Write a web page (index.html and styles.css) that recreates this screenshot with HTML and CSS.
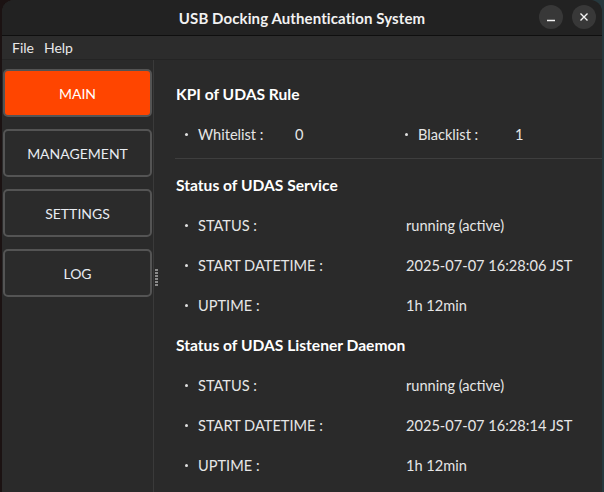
FILE: index.html
```html
<!DOCTYPE html>
<html>
<head>
<meta charset="utf-8">
<link rel="stylesheet" href="styles.css">
</head>
<body>
<div class="desk">
  <div class="window">
    <div class="titlebar">
      <div class="title">USB Docking Authentication System</div>
      <div class="wbtns">
        <span class="wbtn"><svg width="10" height="10" viewBox="0 0 10 10"><path d="M1 8.5h8" stroke="#f2f2f2" stroke-width="1.4"/></svg></span>
        <span class="wbtn"><svg width="10" height="10" viewBox="0 0 10 10"><path d="M1.5 1.5l7 7M8.5 1.5l-7 7" stroke="#f2f2f2" stroke-width="1.4"/></svg></span>
      </div>
    </div>
    <div class="menubar">
      <span class="menu">File</span>
      <span class="menu">Help</span>
    </div>
    <div class="body">
      <nav class="sidebar">
        <button class="navbtn active">MAIN</button>
        <button class="navbtn">MANAGEMENT</button>
        <button class="navbtn">SETTINGS</button>
        <button class="navbtn">LOG</button>
      </nav>
      <div class="splitter"><span class="grip"></span></div>
      <main class="content">
        <h2 class="heading">KPI of UDAS Rule</h2>
        <div class="kpi">
          <div class="kpi-item"><span class="dot"></span><span class="klabel">Whitelist :</span><span class="kval">0</span></div>
          <div class="kpi-item"><span class="dot"></span><span class="klabel">Blacklist :</span><span class="kval">1</span></div>
        </div>
        <hr class="sep">
        <h2 class="heading">Status of UDAS Service</h2>
        <div class="row"><span class="dot"></span><span class="label">STATUS :</span><span class="val">running (active)</span></div>
        <div class="row"><span class="dot"></span><span class="label">START DATETIME :</span><span class="val">2025-07-07 16:28:06 JST</span></div>
        <div class="row"><span class="dot"></span><span class="label">UPTIME :</span><span class="val">1h 12min</span></div>
        <h2 class="heading">Status of UDAS Listener Daemon</h2>
        <div class="row"><span class="dot"></span><span class="label">STATUS :</span><span class="val">running (active)</span></div>
        <div class="row"><span class="dot"></span><span class="label">START DATETIME :</span><span class="val">2025-07-07 16:28:14 JST</span></div>
        <div class="row"><span class="dot"></span><span class="label">UPTIME :</span><span class="val">1h 12min</span></div>
      </main>
    </div>
  </div>
</div>
</body>
</html>
```

FILE: styles.css
```css
* { box-sizing: border-box; }
html, body { margin: 0; padding: 0; }
body {
  width: 604px;
  height: 492px;
  overflow: hidden;
  background: #1b1212;
  font-family: Lato, "Noto Sans", sans-serif;
  color: #e6e6e6;
}
.desk {
  display: flex;
  height: 492px;
  padding-left: 2px;
  padding-right: 2px;
  background: linear-gradient(to right, #1b1212 0, #1b1212 50%, #26383d 50%, #26383d 100%);
}
.window {
  flex: 1;
  display: flex;
  flex-direction: column;
  background: #2a2a2a;
  border-radius: 12px 12px 0 0;
  overflow: hidden;
}
.titlebar {
  height: 36px;
  flex: none;
  background: #222222;
  border-bottom: 1px solid #0f0f0f;
  display: flex;
  align-items: center;
  justify-content: center;
  position: relative;
}
.title {
  font-size: 15px;
  font-weight: 700;
  color: #f2f2f2;
  letter-spacing: 0.1px;
}
.wbtns {
  position: absolute;
  right: 6px;
  top: 5px;
  display: flex;
  gap: 9px;
}
.wbtn {
  width: 24px;
  height: 24px;
  border-radius: 50%;
  background: #383838;
  display: flex;
  align-items: center;
  justify-content: center;
}
.menubar {
  height: 24px;
  flex: none;
  display: flex;
  align-items: center;
  gap: 10px;
  padding-left: 10px;
  background: #2c2c2c;
  border-bottom: 1px solid #242424;
  font-size: 14px;
  color: #e8e8e8;
}
.body {
  flex: 1;
  display: flex;
  min-height: 0;
}
.sidebar {
  width: 151px;
  flex: none;
  display: flex;
  flex-direction: column;
  gap: 12px;
  padding: 9px 0 0 1px;
}
.navbtn {
  height: 48px;
  width: 149px;
  border: 2px solid #545454;
  border-radius: 5px;
  background: #2b2b2b;
  color: #e8ecf2;
  font-family: Lato, "Noto Sans", sans-serif;
  font-size: 14px;
}
.navbtn.active {
  background: #ff4500;
  color: #ffffff;
}
.splitter {
  width: 22px;
  flex: none;
  border-left: 1px solid #3a3a3a;
  display: flex;
  padding-top: 209px;
}
.grip {
  width: 3px;
  height: 17px;
  margin-left: 1px;
  background: repeating-linear-gradient(to bottom, #8a8a8a 0, #8a8a8a 2px, transparent 2px, transparent 3px);
}
.content {
  flex: 1;
  padding-top: 14px;
  min-width: 0;
}
.heading {
  margin: 0;
  height: 40px;
  line-height: 40px;
  font-size: 15.6px;
  font-weight: 700;
  color: #ffffff;
  padding-left: 1px;
}
.kpi {
  display: flex;
  height: 40px;
  align-items: center;
}
.kpi-item {
  display: flex;
  align-items: center;
  flex: none;
  width: 220px;
  font-size: 14.6px;
}
.dot {
  width: 3px;
  height: 3px;
  border-radius: 50%;
  background: #e0e0e0;
  margin-left: 10px;
  margin-right: 10px;
  flex: none;
}
.klabel { width: 97px; flex: none; }
.sep {
  margin: 4px 0 6px 0;
  border: 0;
  height: 1px;
  background: #3e3e3e;
}
.row {
  display: flex;
  align-items: center;
  height: 40px;
  font-size: 14.6px;
}
.label { width: 208px; flex: none; }
```
